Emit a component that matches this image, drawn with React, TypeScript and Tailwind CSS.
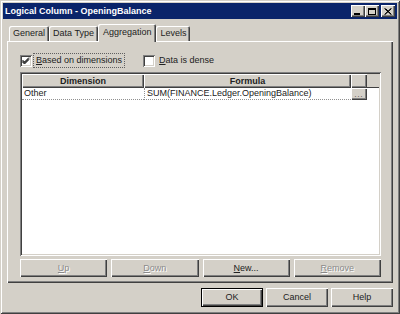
import React from "react";

const raised =
  "shadow-[inset_1px_1px_#ffffff,inset_-1px_-1px_#404040,inset_-2px_-2px_#808080]";
const sunken =
  "shadow-[inset_1px_1px_#808080,inset_-1px_-1px_#ffffff,inset_2px_2px_#404040,inset_-2px_-2px_#d4d0c8]";
const tabEdge =
  "shadow-[inset_1px_1px_#ffffff,inset_-1px_0_#404040,inset_-2px_0_#808080]";

function TitleButton({ children }: { children: React.ReactNode }) {
  return (
    <div className={`w-[14px] h-[12px] bg-[#d4d0c8] ${raised} flex items-center justify-center`}>
      {children}
    </div>
  );
}

function Checkbox({ checked }: { checked: boolean }) {
  return (
    <div className={`w-[12px] h-[12px] bg-white ${sunken} flex items-center justify-center`}>
      {checked && (
        <svg width="8" height="8" viewBox="0 0 8 8">
          <path d="M0.5 3 L2.5 5 L7 0.5 M0.5 4 L2.5 6 L7 1.5 M0.5 5 L2.5 7 L7 2.5" stroke="#000" strokeWidth="1" fill="none" />
        </svg>
      )}
    </div>
  );
}

function Button({
  label,
  accel,
  disabled,
  isDefault,
  className = "",
}: {
  label: string;
  accel?: number;
  disabled?: boolean;
  isDefault?: boolean;
  className?: string;
}) {
  const text =
    accel === undefined ? (
      label
    ) : (
      <>
        {label.slice(0, accel)}
        <span className="underline">{label[accel]}</span>
        {label.slice(accel + 1)}
      </>
    );
  return (
    <div
      className={`h-full flex items-center justify-center bg-[#d4d0c8] ${
        isDefault
          ? "shadow-[inset_0_0_0_1px_#000,inset_2px_2px_#ffffff,inset_-2px_-2px_#404040,inset_-3px_-3px_#808080]"
          : raised
      } ${disabled ? "text-[#8a8a8a] [text-shadow:1px_1px_0_#ffffff]" : "text-[#222]"} ${className}`}
    >
      {text}
    </div>
  );
}

export default function App() {
  return (
    <div
      className={`w-[400px] h-[314px] bg-[#d4d0c8] flex flex-col px-[3px] pt-[3px] text-[9px] leading-none text-[#222] shadow-[inset_1px_1px_#d4d0c8,inset_-1px_-1px_#404040,inset_2px_2px_#ffffff,inset_-2px_-2px_#808080]`}
      style={{ fontFamily: '"Liberation Sans", Arial, sans-serif' }}
    >
      {/* title bar */}
      <div className="h-[16px] bg-[#0a246a] flex items-center pl-[2px] pr-[2px]">
        <span className="text-white font-bold text-[9px]">Logical Column - OpeningBalance</span>
        <div className="ml-auto flex items-center">
          <TitleButton>
            <div className="w-[6px] h-[2px] bg-black mt-[5px] -ml-[2px]" />
          </TitleButton>
          <TitleButton>
            <div className="w-[8px] h-[7px] border border-black border-t-2" />
          </TitleButton>
          <div className="w-[2px]" />
          <TitleButton>
            <svg width="8" height="7" viewBox="0 0 8 7">
              <path d="M0.5 0.5 L7 6.5 M1.5 0.5 L7.5 6.5 M7 0.5 L0.5 6.5 M7.5 0.5 L1 6.5" stroke="#000" strokeWidth="1" />
            </svg>
          </TitleButton>
        </div>
      </div>

      <div className="flex flex-col px-[4px] pt-[5px]">
        {/* tabs */}
        <div className="flex items-end h-[17px] pl-[2px]">
          <div className={`h-[15px] px-[4px] flex items-center ${tabEdge} rounded-t-[2px]`}>General</div>
          <div className={`h-[15px] px-[4px] flex items-center ${tabEdge} rounded-t-[2px]`}>Data Type</div>
          <div
            className={`relative z-10 h-[18px] -mb-[1px] px-[5px] pb-[2px] flex items-center bg-[#d4d0c8] ${tabEdge} rounded-t-[2px]`}
          >
            Aggregation
          </div>
          <div className={`h-[15px] px-[4px] flex items-center ${tabEdge} rounded-t-[2px]`}>Levels</div>
        </div>

        {/* panel */}
        <div className={`h-[242px] ${raised} flex flex-col pl-[13px] pr-[12px] pt-[13px]`}>
          <div className="flex items-center h-[13px]">
            <Checkbox checked />
            <span className="ml-[2px] px-[2px] py-[2px] outline outline-1 outline-dotted outline-[#606060]">
              <span className="underline">B</span>ased on dimensions
            </span>
            <div className="ml-[19px]">
              <Checkbox checked={false} />
            </div>
            <span className="ml-[4px]">
              <span className="underline">D</span>ata is dense
            </span>
          </div>

          {/* grid */}
          <div className={`mt-[5px] h-[184px] bg-white ${sunken} p-[2px] flex flex-col`}>
            <div className="flex h-[14px] bg-[#d4d0c8] font-bold">
              <div className={`w-[122px] flex items-center justify-center ${raised}`}>Dimension</div>
              <div className={`w-[207px] flex items-center justify-center ${raised}`}>Formula</div>
              <div className={`w-[16px] ${raised}`} />
              <div className="flex-1 shadow-[inset_0_-1px_#404040]" />
            </div>
            <div className="flex h-[12px] bg-white">
              <div className="w-[122px] flex items-center pl-[2px] border-b border-dotted border-[#909090]">Other</div>
              <div className="w-[207px] flex items-center pl-[2px] border-b border-l border-dotted border-[#909090]">
                SUM(FINANCE.Ledger.OpeningBalance)
              </div>
              <div className={`w-[16px] bg-[#d4d0c8] ${raised} flex items-end justify-center pb-[2px]`}>
                <span className="text-[7px] leading-none tracking-[1px]">...</span>
              </div>
            </div>
          </div>

          {/* row buttons */}
          <div className="mt-[3px] h-[18px] flex gap-[4px]">
            <Button label="Up" accel={0} disabled className="flex-1" />
            <Button label="Down" accel={0} disabled className="flex-1" />
            <Button label="New..." accel={0} className="flex-1" />
            <Button label="Remove" accel={0} disabled className="flex-1" />
          </div>
        </div>

        {/* dialog buttons */}
        <div className="mt-[5px] h-[19px] flex justify-end gap-[3px]">
          <Button label="OK" isDefault className="w-[62px]" />
          <Button label="Cancel" className="w-[62px]" />
          <Button label="Help" className="w-[62px]" />
        </div>
      </div>
    </div>
  );
}
